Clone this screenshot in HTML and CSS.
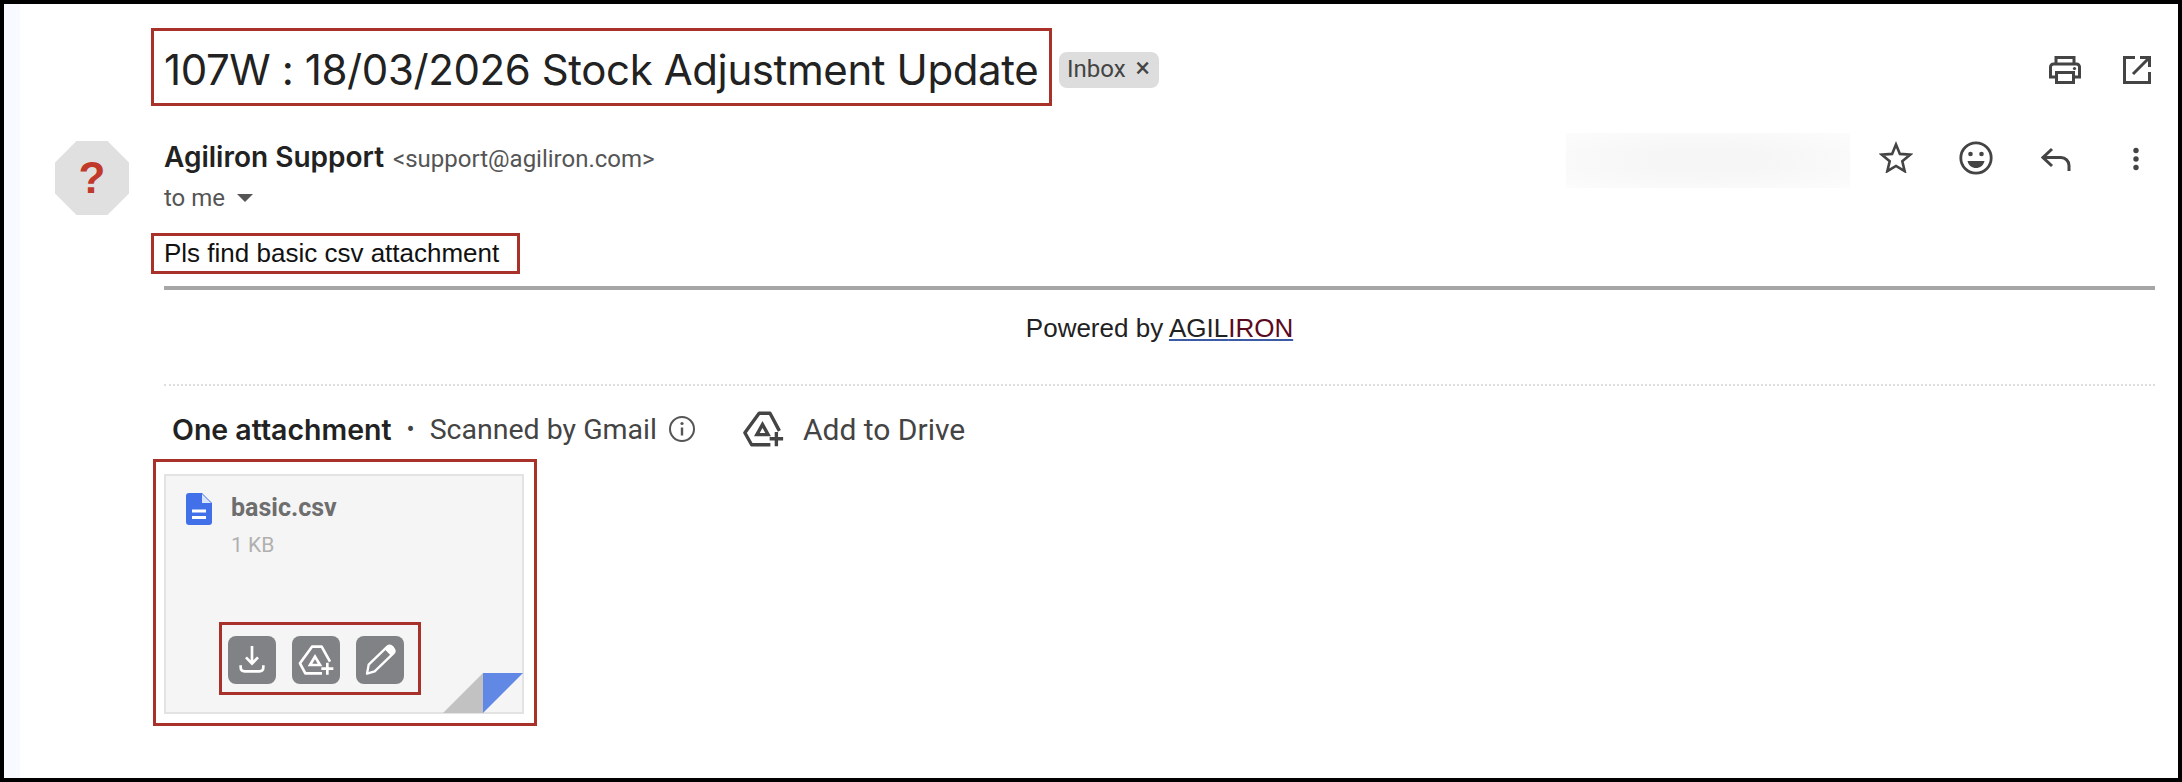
FILE: index.html
```html
<!DOCTYPE html>
<html lang="en">
<head>
    <meta charset="UTF-8">
    <meta name="viewport" content="width=device-width, initial-scale=1.0">
    <title>107W : 18/03/2026 Stock Adjustment Update</title>
    <link rel="stylesheet" href="styles.css">
</head>
<body>
    <div class="frame">
        <!-- subject row -->
        <div class="subject-row">
            <h1 class="subject mark">107W : 18/03/2026 Stock Adjustment Update</h1>
            <span class="chip">Inbox <span class="chip-x">×</span></span>
            <div class="subject-icons">
                <svg class="icon-print" viewBox="0 0 32 28"><path d="M7 8V1.500h18V8" fill="none" stroke="#444" stroke-width="3"/><path d="M7 21H1.500V11a3 3 0 0 1 3-3h23a3 3 0 0 1 3 3v10H25" fill="none" stroke="#444" stroke-width="3"/><path d="M7.500 16.500h17v10h-17z" fill="none" stroke="#444" stroke-width="3"/><circle cx="25.500" cy="12.500" r="1.600" fill="#444"/></svg>
                <svg class="icon-open" viewBox="0 0 28 28"><path d="M12 1.500H1.500v25h25V16" fill="none" stroke="#444" stroke-width="3"/><path d="M17 1.500h9.500V11M26 2 10 18" fill="none" stroke="#444" stroke-width="3"/></svg>
            </div>
        </div>

        <!-- sender row -->
        <div class="sender-row">
            <div class="avatar"><span>?</span></div>
            <div class="sender-info">
                <div class="sender-line"><b class="sender-name">Agiliron Support</b> <span class="sender-mail">&lt;support@agiliron.com&gt;</span></div>
                <div class="to-line">to me <i class="caret"></i></div>
            </div>
            <div class="blurred"></div>
            <div class="sender-icons">
                <svg class="icon-star" viewBox="0 0 34 32"><path d="M17 3.500l3.900 9.400 10.200.8-7.800 6.600 2.400 9.900L17 25l-8.700 5.200 2.400-9.900-7.800-6.600 10.200-.8z" fill="none" stroke="#444" stroke-width="2.600"/></svg>
                <svg class="icon-smile" viewBox="0 0 34 34"><circle cx="17" cy="17" r="15.200" fill="none" stroke="#444" stroke-width="2.800"/><circle cx="11.500" cy="13" r="2.300" fill="#444"/><circle cx="22.500" cy="13" r="2.300" fill="#444"/><path d="M8.500 20h17c-1 4.500-4.500 7-8.500 7s-7.500-2.500-8.500-7z" fill="#444"/></svg>
                <svg class="icon-reply" viewBox="0 0 30 24"><path d="M11 2 2 10.500 11 19M2.500 10.500H20a8 8 0 0 1 8 8V24" fill="none" stroke="#444" stroke-width="3"/></svg>
                <svg class="icon-dots" viewBox="0 0 8 24"><circle cx="4" cy="3.500" r="2.700" fill="#444"/><circle cx="4" cy="12" r="2.700" fill="#444"/><circle cx="4" cy="20.500" r="2.700" fill="#444"/></svg>
            </div>
        </div>

        <!-- message -->
        <div class="message">
            <div class="body-text mark">Pls find basic csv attachment</div>
            <hr class="rule">
            <div class="powered">Powered by <a class="powered-link" href="#">AGIL<span class="iron">IRON</span></a></div>
            <div class="dots-line"></div>
        </div>

        <!-- attachments -->
        <div class="attach-head">
            <b class="attach-title">One attachment</b>
            <span class="attach-dot">•</span>
            <span class="attach-scan">Scanned by Gmail</span>
            <svg class="icon-info" viewBox="0 0 28 28"><circle cx="14" cy="14" r="12" fill="none" stroke="#555" stroke-width="2"/><path d="M14 12.500v8" stroke="#555" stroke-width="2.400"/><circle cx="14" cy="8.500" r="1.600" fill="#555"/></svg>
            <svg class="icon-drive" viewBox="262 102 114 96"><path d="M360 155 335 108H306L268 160l18 32h50" fill="none" stroke="#444" stroke-width="9" stroke-linejoin="round"/><path d="M300 165 315 138l15 27z" fill="none" stroke="#444" stroke-width="9"/><path d="M352 158v38M334 176h36" stroke="#444" stroke-width="9"/></svg>
            <span class="attach-drive">Add to Drive</span>
        </div>

        <div class="attach-box mark">
            <div class="card">
                <div class="file-row">
                    <svg class="icon-doc" viewBox="0 0 26 32"><path d="M3 0h13l10 10v19a3 3 0 0 1-3 3H3a3 3 0 0 1-3-3V3a3 3 0 0 1 3-3z" fill="#4170e8"/><path d="M16 1v9h9z" fill="#dbe4fb"/><path d="M6 16.500h14v3H6zM6 23h14v3H6z" fill="#fff"/></svg>
                    <div class="file-text">
                        <div class="file-name">basic.csv</div>
                        <div class="file-size">1 KB</div>
                    </div>
                </div>
                <div class="actions mark">
                    <div class="action-btn">
                        <svg viewBox="54 78 144 144"><path d="M126 108v52M108 142l18 19 18-19M92 166v6q0 12 12 12h44q12 0 12-12v-6" fill="none" stroke="#fff" stroke-width="8"/></svg>
                    </div>
                    <div class="action-btn">
                        <svg viewBox="246 78 144 144"><path d="M360 155 335 110H306L270 160l16 30h50" fill="none" stroke="#fff" stroke-width="8" stroke-linejoin="round"/><path d="M300 165 315 140l15 25z" fill="none" stroke="#fff" stroke-width="8"/><path d="M352 158v36M334 176h36" stroke="#fff" stroke-width="8"/></svg>
                    </div>
                    <div class="action-btn">
                        <svg viewBox="438 78 144 144"><path d="M471 191l5-27 56-54q8-6 16 2l4 6q4 6-2 12l-56 54z" fill="none" stroke="#fff" stroke-width="7" stroke-linejoin="round"/><path d="M530 112q10-8 18 0l4 6q4 6-2 12l-7 7-19-19z" fill="#fff"/></svg>
                    </div>
                </div>
                <svg class="fold" viewBox="0 0 80 40"><path d="M40 0v40H0z" fill="#c2c2c2"/><path d="M40 0h40L40 40z" fill="#6288e6"/></svg>
            </div>
        </div>
    </div>
</body>
</html>
```

FILE: styles.css
```css
body {
    margin: 0;
    background: #fff;
    font-family: "Liberation Sans", Arial, sans-serif;
    color: #222;
}

.frame {
    box-sizing: border-box;
    width: 2182px;
    height: 782px;
    border: 4px solid #000;
    padding: 24px 27px 0 51px;
    overflow: hidden;
    background: linear-gradient(to right, #f8faff 16px, #fff 16px);
}

.mark {
    border: 3px solid #a8322a;
    box-sizing: border-box;
}

/* subject */
.subject-row {
    display: flex;
    align-items: center;
    margin-left: 96px;
}

.subject {
    width: 901px;
    height: 78px;
    margin: 0;
    padding-left: 10px;
    font-family: "Inter", sans-serif;
    font-size: 42px;
    font-weight: 400;
    letter-spacing: -0.4px;
    line-height: 78px;
    white-space: nowrap;
    color: #222;
}

.chip {
    margin: 6px 0 0 7px;
    height: 36px;
    width: 100px;
    box-sizing: border-box;
    padding-left: 8px;
    background: #ddd;
    border-radius: 8px;
    font-family: "Roboto", sans-serif;
    font-size: 24px;
    line-height: 34px;
    color: #444;
}

.chip-x {
    margin-left: 4px;
    font-size: 27px;
    line-height: 24px;
}

.subject-icons {
    margin: 6px 0 0 auto;
    display: flex;
    align-items: center;
    gap: 42px;
}

.icon-print { width: 32px; height: 28px; }
.icon-open { width: 28px; height: 28px; }

/* sender */
.sender-row {
    display: flex;
    margin-top: 35px;
    height: 92px;
}

.avatar {
    width: 74px;
    height: 74px;
    background: #e0e0e0;
    clip-path: polygon(29% 0, 71% 0, 100% 29%, 100% 71%, 71% 100%, 29% 100%, 0 71%, 0 29%);
    display: flex;
    align-items: center;
    justify-content: center;
    font-size: 44px;
    font-weight: bold;
    color: #c0392b;
}

.sender-info {
    margin-left: 35px;
    width: 1402px;
    font-family: "Roboto", sans-serif;
}

.sender-line {
    margin-top: -1px;
    font-size: 24px;
    line-height: 34px;
    white-space: nowrap;
    color: #555;
}

.sender-name {
    font-family: "Inter", sans-serif;
    font-size: 28px;
    font-weight: 600;
    color: #222;
}

.sender-mail {
    margin-left: 3px;
}

.to-line {
    margin-top: 7px;
    font-size: 24px;
    line-height: 30px;
    color: #555;
    display: flex;
    align-items: center;
    gap: 12px;
}

.caret {
    width: 0;
    height: 0;
    border: 8px solid transparent;
    border-top: 8px solid #555;
    border-bottom: 0;
}

.blurred {
    width: 284px;
    height: 55px;
    margin-top: -8px;
    background: radial-gradient(ellipse at center, #f6f6f6 30%, #fcfcfc 100%);
    flex-shrink: 0;
}

.sender-icons {
    display: flex;
    align-items: flex-start;
    margin-left: 29px;
}

.icon-star { width: 34px; height: 32px; }
.icon-smile { width: 34px; height: 34px; margin-left: 46px; }
.icon-reply { width: 30px; height: 24px; margin-left: 48px; margin-top: 6px; }
.icon-dots { width: 8px; height: 24px; margin-left: 61px; margin-top: 6px; }

/* message */
.message {
    margin: 0 -4px 0 96px;
}

.body-text {
    width: 369px;
    height: 41px;
    padding-left: 10px;
    font-size: 26px;
    line-height: 35px;
    color: #111;
}

.rule {
    margin: 12px 0 0 13px;
    height: 4px;
    border: 0;
    background: #a6a6a6;
}

.powered {
    margin: 23px 0 0 13px;
    font-size: 26px;
    line-height: 30px;
    text-align: center;
}

.powered-link {
    color: #222;
    text-decoration: underline;
    text-decoration-color: #3b5ba5;
}

.iron {
    color: #5a0a1e;
}

.dots-line {
    margin: 41px 0 0 13px;
    border-top: 2px dotted #ddd;
}

/* attachments */
.attach-head {
    display: flex;
    align-items: center;
    height: 36px;
    margin: 25px 0 0 117px;
    font-family: "Roboto", sans-serif;
    color: #444;
}

.attach-title {
    font-family: "Inter", sans-serif;
    font-size: 28.500px;
    font-weight: 600;
    color: #222;
}

.attach-dot {
    margin-left: 15px;
    font-size: 24px;
}

.attach-scan {
    margin-left: 15px;
    font-size: 28.500px;
}

.icon-info {
    width: 28px;
    height: 28px;
    margin-left: 11px;
}

.icon-drive {
    width: 44px;
    height: 36px;
    margin-left: 46px;
}

.attach-drive {
    margin-left: 17px;
    font-size: 30px;
}

.attach-box {
    margin: 12px 0 0 98px;
    width: 384px;
    height: 267px;
    padding: 12px 10px 9px 8px;
}

.card {
    position: relative;
    box-sizing: border-box;
    width: 360px;
    height: 240px;
    background: #f5f5f5;
    border: 2px solid #e3e3e3;
    padding: 17px 0 0 20px;
}

.file-row {
    display: flex;
    gap: 19px;
}

.icon-doc {
    width: 26px;
    height: 32px;
    flex-shrink: 0;
}

.file-text {
    font-family: "Roboto", sans-serif;
}

.file-name {
    font-size: 25px;
    font-weight: 700;
    line-height: 30px;
    color: #6e6e6e;
}

.file-size {
    margin-top: 8px;
    font-size: 21px;
    line-height: 28px;
    color: #b0b0b0;
}

/* these sit at the bottom of the card over the fold */
.actions {
    position: absolute;
    left: 53px;
    top: 146px;
    width: 202px;
    height: 73px;
    display: flex;
    gap: 16px;
    padding: 11px 0 0 6px;
}

.action-btn {
    width: 48px;
    height: 48px;
    border-radius: 8px;
    background: #808285;
    flex-shrink: 0;
}

.action-btn svg {
    display: block;
    width: 48px;
    height: 48px;
}

.fold {
    position: absolute;
    right: -1px;
    bottom: -1px;
    width: 80px;
    height: 40px;
}
```
